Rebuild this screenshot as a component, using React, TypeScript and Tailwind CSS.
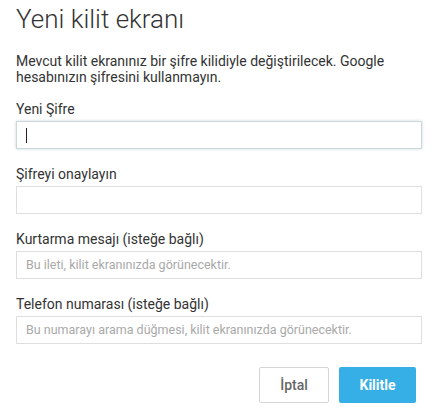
import React from "react";

function Field({ label, placeholder, focused }: { label: string; placeholder?: string; focused?: boolean }) {
  return (
    <div className="flex flex-col">
      <div className="text-[14px] leading-[16px] text-[#333]">{label}</div>
      <div
        className={
          "mt-[4px] h-[28px] flex items-center px-[8px] bg-white border " +
          (focused
            ? "border-[#c9d9da] shadow-[0_0_3px_rgba(120,150,160,0.35)]"
            : "border-[#dedede]")
        }
      >
        {focused ? <span className="block w-px h-[15px] bg-[#222] ml-[1px]" /> : null}
        {placeholder ? (
          <span className="text-[12.5px] text-[#a9a9a9] ml-[1px]">{placeholder}</span>
        ) : null}
      </div>
    </div>
  );
}

export default function App() {
  return (
    <div
      className="w-[438px] h-[414px] bg-white px-[16px] pt-[3px]"
      style={{ fontFamily: "Roboto, 'Liberation Sans', sans-serif" }}
    >
      <h1 className="text-[26px] leading-[32px] font-light text-[#333]">Yeni kilit ekranı</h1>
      <p className="mt-[18px] text-[14px] leading-[16px] text-[#333]">
        Mevcut kilit ekranınız bir şifre kilidiyle değiştirilecek. Google hesabınızın şifresini kullanmayın.
      </p>
      <div className="mt-[16px] flex flex-col gap-[17px]">
        <Field label="Yeni Şifre" focused />
        <Field label="Şifreyi onaylayın" />
        <Field label="Kurtarma mesajı (isteğe bağlı)" placeholder="Bu ileti, kilit ekranınızda görünecektir." />
        <Field
          label="Telefon numarası (isteğe bağlı)"
          placeholder="Bu numarayı arama düğmesi, kilit ekranınızda görünecektir."
        />
      </div>
      <div className="mt-[23px] flex justify-end gap-[10px] pr-[6px]">
        <button className="w-[70px] h-[36px] rounded-[2px] border border-[#d5d5d5] bg-white text-[14px] font-medium text-[#666]">
          İptal
        </button>
        <button className="w-[77px] h-[36px] rounded-[2px] bg-[#36aee6] text-[14px] font-bold text-white">
          Kilitle
        </button>
      </div>
    </div>
  );
}
